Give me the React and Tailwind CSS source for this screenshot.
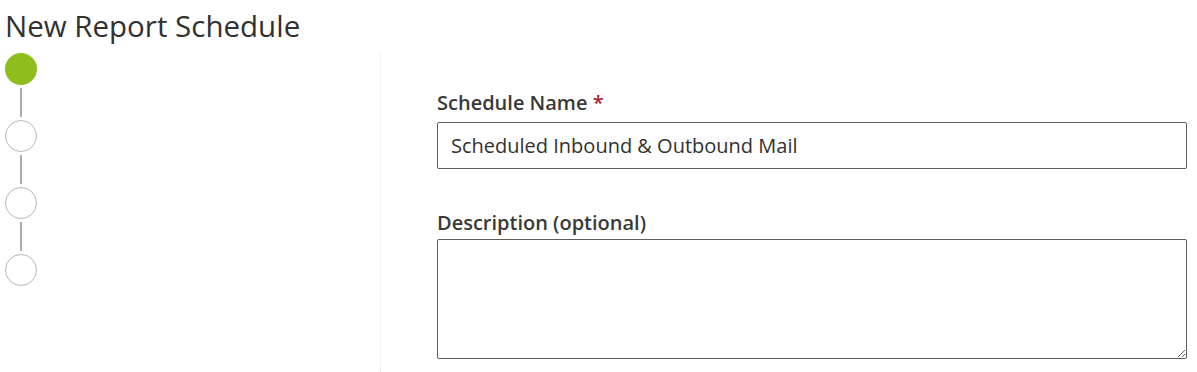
export default function App() {
  const steps = [true, false, false, false]
  return (
    <div className="min-h-[372px] bg-white pl-[5px] text-[#323130] font-['Open_Sans',sans-serif]">
      <h1 className="pt-[6px] mb-[7px] text-[29.5px] leading-[40px] font-normal">New Report Schedule</h1>
      <div className="flex">
        <div className="w-[375px] shrink-0">
          {steps.map((done, i) => (
            <div key={i} className="flex flex-col items-start">
              {i > 0 && <div className="ml-[15px] my-[3px] h-[29px] w-[2px] bg-[#a5aeb1]" />}
              <div
                className={
                  done
                    ? 'h-[32px] w-[32px] rounded-full bg-[#8dbe1c]'
                    : 'h-[32px] w-[32px] rounded-full border border-[#b0bbbd] bg-white'
                }
              />
            </div>
          ))}
        </div>
        <div className="flex-1 min-h-[319px] border-l border-dotted border-[#e6e6e6] pl-[56px] pr-[10px] pt-[38px]">
          <label className="block text-[20px] leading-[24px] font-semibold text-[#3a3938] mb-[7px]">
            Schedule Name <span className="text-[#a4262c]">*</span>
          </label>
          <input
            type="text"
            defaultValue="Scheduled Inbound & Outbound Mail"
            className="block w-[750px] h-[47px] rounded-[2px] border border-[#605e5c] px-[13px] text-[20px] text-[#323130] outline-none"
          />
          <label className="block mt-[42px] text-[20px] leading-[24px] font-semibold text-[#3a3938] mb-[4px]">
            Description (optional)
          </label>
          <textarea className="block w-[750px] h-[120px] rounded-[2px] border border-[#605e5c] px-[13px] py-[8px] text-[20px] outline-none" />
        </div>
      </div>
    </div>
  )
}
